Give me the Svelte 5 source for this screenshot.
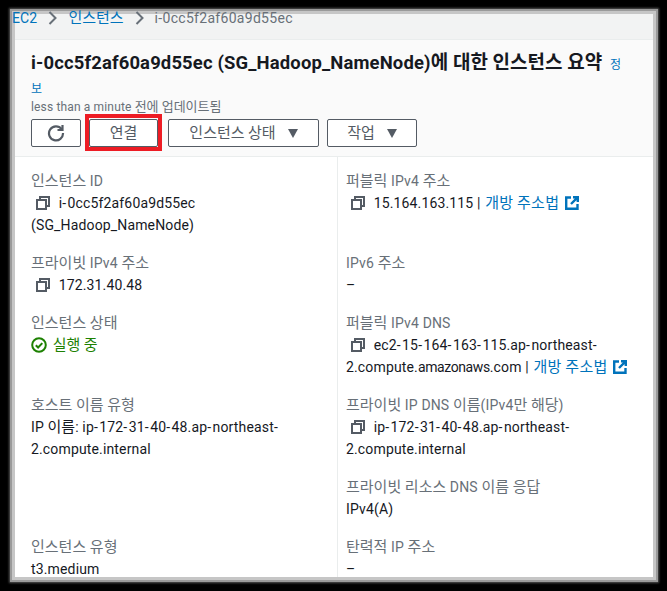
<script lang="ts">
    const fields = [
        { label: "인스턴스 ID", value: "i-0cc5f2af60a9d55ec (SG_Hadoop_NameNode)", copy: true },
        { label: "퍼블릭 IPv4 주소", value: "15.164.163.115", copy: true, open: true, right: true },
        { label: "프라이빗 IPv4 주소", value: "172.31.40.48", copy: true },
        { label: "IPv6 주소", value: "–", right: true },
        { label: "인스턴스 상태", value: "실행 중", running: true },
        { label: "퍼블릭 IPv4 DNS", value: "ec2-15-164-163-115.ap-northeast-2.compute.amazonaws.com", copy: true, open: true, right: true },
        { label: "호스트 이름 유형", value: "IP 이름: ip-172-31-40-48.ap-northeast-2.compute.internal", span: true },
        { label: "프라이빗 IP DNS 이름(IPv4만 해당)", value: "ip-172-31-40-48.ap-northeast-2.compute.internal", copy: true, right: true },
        { label: "프라이빗 리소스 DNS 이름 응답", value: "IPv4(A)", right: true },
        { label: "인스턴스 유형", value: "t3.medium" },
        { label: "탄력적 IP 주소", value: "–", right: true },
    ];

    // Hangul, hyphens and the long domain word need their own widths
    function runs(text: string) {
        return text.split(/([가-힣]+|-|amazonaws)/).filter(Boolean);
    }

    function runClass(r: string) {
        if (r === "-") return "hy";
        if (r === "amazonaws") return "tight";
        return /[가-힣]/.test(r) ? "ko" : "";
    }
</script>

{#snippet txt(text)}
    {#each runs(text) as r}{#if runClass(r)}<span class={runClass(r)}>{r}</span>{:else}{r}{/if}{/each}
{/snippet}

<div class="frame">
    <div class="page">
        <div class="crumbs">
            <nav>
                <a href="#ec2">EC2</a>
                <svg viewBox="0 0 9 14" width="9" height="14" fill="none" stroke="#687078" stroke-width="2"><path d="M1.5 1l6 6-6 6" /></svg>
                <a href="#instances">{@render txt("인스턴스")}</a>
                <svg viewBox="0 0 9 14" width="9" height="14" fill="none" stroke="#687078" stroke-width="2"><path d="M1.5 1l6 6-6 6" /></svg>
                <span class="crumb-id">i-0cc5f2af60a9d55ec</span>
            </nav>
        </div>

        <header>
            <h1>i-0cc5f2af60a9d55ec (SG_Hadoop_NameNode){@render txt("에 대한 인스턴스 요약")} <a href="#info">정보</a></h1>
            <p class="updated">less than a minute {@render txt("전에 업데이트됨")}</p>
            <div class="actions">
                <button class="refresh" aria-label="새로 고침">
                    <svg viewBox="0 0 18 18" width="18" height="18" fill="none" stroke="#545b64" stroke-width="2.2">
                        <path d="M14.6 5.2A7 7 0 1 0 16 9" />
                        <path d="M15.5 1v5h-5" />
                    </svg>
                </button>
                <button class="connect">{@render txt("연결")}</button>
                <button class="state"><span>{@render txt("인스턴스 상태")}</span><i class="caret"></i></button>
                <button class="work"><span>{@render txt("작업")}</span><i class="caret"></i></button>
            </div>
        </header>

        <section class="details">
            {#each fields as f}
                <div class="cell" class:right={f.right} class:span={f.span}>
                    <div class="label">{@render txt(f.label)}</div>
                    <div class="value" class:running={f.running}>
                        {#if f.copy}
                            <svg class="copy" viewBox="0 0 14 14" width="14" height="14" fill="none" stroke="#545b64" stroke-width="2">
                                <rect x="1" y="4" width="9" height="9" />
                                <path d="M4 4V1h9v9h-3" />
                            </svg>
                        {/if}
                        {#if f.running}
                            <svg class="ok" viewBox="0 0 16 16" width="16" height="16" fill="none" stroke="#1d8102" stroke-width="2">
                                <circle cx="8" cy="8" r="6.8" />
                                <path d="M4.8 8.2l2.3 2.3 4.2-4.4" />
                            </svg>
                        {/if}
                        {@render txt(f.value)}
                        {#if f.open}
                            <span class="sep">|</span>
                            <a href="#open">{@render txt("개방 주소법")}
                                <svg class="ext" viewBox="0 0 14 14" width="14" height="14" fill="none" stroke="#0073bb" stroke-width="2.4">
                                    <path d="M6 1.5H1.2v11.3h11.3V8" />
                                    <path d="M8 1.2h4.8V6M12.6 1.4L6 8" />
                                </svg>
                            </a>
                        {/if}
                    </div>
                </div>
            {/each}
        </section>
    </div>
</div>

<style>
    :global(body) {
        background: #000;
        font-family: Roboto, "Noto Sans CJK KR", sans-serif;
    }

    .frame {
        width: 667px;
        height: 591px;
        box-sizing: border-box;
        padding: 14px 14px 14px 15px;
        overflow: hidden;
    }

    .page {
        height: 100%;
        background: #fff;
        font-size: 14px;
        line-height: 22px;
        letter-spacing: 0.15px;
        color: #16191f;
        display: flex;
        flex-direction: column;
        box-shadow: 0 0 0 3px #c6c6c6, 0 0 0 5px #9a9a9a, 0 0 2px 6px #555;
    }

    a {
        color: #0073bb;
        text-decoration: none;
    }

    .ko {
        font-size: 15px;
        letter-spacing: 0;
    }

    .hy {
        letter-spacing: 1.5px;
    }

    .tight {
        letter-spacing: -0.4px;
    }

    .value a .ko {
        letter-spacing: 0.3px;
    }

    .crumbs {
        height: 26px;
        flex: none;
        background: #f2f3f3;
        border-bottom: 1px solid #eaeded;
        box-sizing: border-box;
    }

    nav {
        display: flex;
        align-items: center;
        gap: 11px;
        margin: -7px 0 0 -3px;
        color: #687078;
        white-space: nowrap;
    }

    .crumb-id {
        letter-spacing: 0.3px;
    }

    header {
        flex: none;
        height: 117px;
        box-sizing: border-box;
        background: #fafafa;
        border-bottom: 1px solid #eaeded;
        padding: 11px 22px 0 16px;
    }

    h1 {
        margin: 0;
        font-size: 18.45px;
        line-height: 24px;
        font-weight: 700;
        color: #16191f;
    }

    h1 .ko {
        font-size: 19px;
        line-height: 1;
    }

    h1 a {
        font-size: 12px;
        font-weight: 400;
        margin-left: 3px;
        line-height: 1;
    }

    .updated {
        margin: 0;
        font-size: 12px;
        line-height: 16px;
        color: #687078;
    }

    .updated .ko {
        font-size: 13px;
        line-height: 1;
    }

    .actions {
        display: flex;
        margin-top: 4px;
    }

    button {
        height: 28px;
        box-sizing: border-box;
        border: 1px solid #545b64;
        border-radius: 2px;
        background: #fff;
        color: #545b64;
        font: inherit;
        padding: 0;
        display: flex;
        align-items: center;
        justify-content: center;
        gap: 12px;
    }

    .refresh { width: 50px; margin-right: 8px; }
    .connect {
        width: 69px;
        margin-right: 10px;
        position: relative;
    }
    /* red annotation box drawn over the screenshot */
    .connect::after {
        content: "";
        position: absolute;
        inset: -6px -5px -5px -5px;
        border: 4px solid #ed1c24;
    }
    .state { width: 151px; margin-right: 8px; }
    .work { width: 90px; }

    .caret {
        width: 0;
        height: 0;
        border: solid transparent;
        border-width: 9px 5.5px 0;
        border-top-color: #545b64;
    }

    .details {
        flex: 1;
        min-height: 0;
        overflow: hidden;
        display: grid;
        grid-template-columns: 322px 1fr;
        align-content: start;
    }

    .cell {
        padding: 13px 16px 3px;
        grid-column: 1;
    }

    .cell.right {
        grid-column: 2;
        border-left: 1px solid #eaeded;
        padding: 13px 8px 3px;
    }

    .cell.span {
        grid-row: span 2;
    }

    .label {
        color: #687078;
    }

    .running {
        color: #1d8102;
    }

    .copy {
        margin: 0 5px 0 5px;
        vertical-align: -2px;
    }

    .ok {
        margin-right: 2px;
        vertical-align: -3px;
    }

    .ext {
        margin-left: 2px;
        vertical-align: -2px;
    }

    .sep {
        color: #16191f;
        margin: 0 1px 0 0;
    }
</style>
